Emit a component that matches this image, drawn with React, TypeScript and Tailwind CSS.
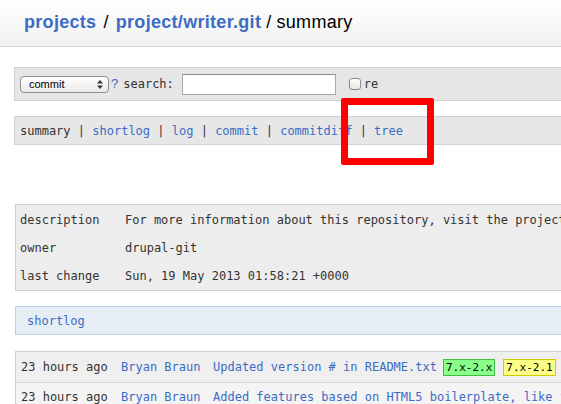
import React from "react";

const mono = "font-['DejaVu_Sans_Mono',monospace]";
const link = "text-[#3c6cc4]";

function SelectBox() {
  return (
    <div className="flex h-[17px] w-[89px] items-center justify-between rounded-[4px] border border-[#8e8e8e] bg-gradient-to-b from-white to-[#e9e9e9] pl-[8px] pr-[5px] font-['Liberation_Sans',sans-serif] text-[11px] text-black">
      <span>commit</span>
      <svg width="6" height="9" viewBox="0 0 6 9">
        <path d="M3 0 L6 3.5 L0 3.5 Z" fill="#333" />
        <path d="M3 9 L6 5.5 L0 5.5 Z" fill="#333" />
      </svg>
    </div>
  );
}

const shortlog = [
  {
    age: "23 hours ago",
    author: "Bryan Braun",
    title: "Updated version # in README.txt",
    tags: true,
  },
  {
    age: "23 hours ago",
    author: "Bryan Braun",
    title: "Added features based on HTML5 boilerplate, like fixing the IE conditional comments",
    tags: false,
  },
];

export default function App() {
  return (
    <div className="relative h-[404px] w-[561px] overflow-hidden bg-white">
      <div className="w-[900px]">
        <div className="flex h-[47px] items-center border-b border-[#d9d9d9] bg-gradient-to-b from-white to-[#f1f1f1] pb-[2px] pl-[24px] font-['Liberation_Sans',sans-serif] text-[18px] tracking-[0.3px] text-black">
          <span className={`font-bold ${link}`}>projects</span>
          <span className="mx-[7px]">/</span>
          <span className={`font-bold ${link}`}>project/writer.git</span>
          <span className="mx-[5px]">/</span>
          <span>summary</span>
        </div>

        <div className={`mx-[14px] ${mono} text-[12px] text-[#333]`}>
          <div className="mt-[20px] flex h-[34px] items-center border border-[#d0d0d0] bg-[#e6e6e6] pl-[5px]">
            <SelectBox />
            <span className={`ml-[2px] font-['Liberation_Sans',sans-serif] text-[13px] ${link}`}>?</span>
            <span className="ml-[5px]">search:</span>
            <div className="ml-[8px] h-[21px] w-[154px] border border-[#a9a9a9] border-t-[#8a8a8a] bg-white" />
            <div className="ml-[13px] h-[12px] w-[12px] rounded-[3px] border border-[#8a8a8a] bg-gradient-to-b from-white to-[#e4e4e4]" />
            <span className="ml-[3px]">re</span>
          </div>

          <div className="mt-[15px] flex h-[29px] items-center whitespace-pre border border-[#d3d3d3] bg-[#e7e7e7] pl-[5px] pt-[1px]">
            <span>summary</span>
            <span> | </span>
            <span className={link}>shortlog</span>
            <span> | </span>
            <span className={link}>log</span>
            <span> | </span>
            <span className={link}>commit</span>
            <span> | </span>
            <span className={link}>commitdiff</span>
            <span> | </span>
            <span className={link}>tree</span>
          </div>

          <div className="mt-[59px] ml-[1px] border border-[#cfcfcf] bg-[#ededed] pt-[1px]">
            {[
              ["description", "For more information about this repository, visit the project page at http://drupal.org/project/writer"],
              ["owner", "drupal-git"],
              ["last change", "Sun, 19 May 2013 01:58:21 +0000"],
            ].map(([k, v]) => (
              <div key={k} className="flex h-[28px] items-center whitespace-pre">
                <span className="w-[109px] pl-[4px]">{k}</span>
                <span>{v}</span>
              </div>
            ))}
          </div>

          <div className="mt-[15px] ml-[1px] flex h-[29px] items-center border border-[#b8d3ec] bg-[#e6edf4] pl-[11px]">
            <span className={link}>shortlog</span>
          </div>

          <div className="mt-[16px] ml-[1px] border border-[#d0d0d0] shadow-[inset_0_2px_3px_rgba(0,0,0,0.08)]">
            {shortlog.map((r, i) => (
              <div
                key={i}
                className={`flex items-center whitespace-pre ${i === 0 ? "h-[30px] bg-[#efefef]" : "h-[28px] border-t border-[#d6d6d6] bg-[#f4f4f4]"}`}
              >
                <span className="w-[105px] pl-[5px]">{r.age}</span>
                <span className={`w-[92px] ${link}`}>{r.author}</span>
                <span className={link}>{r.title}</span>
                {r.tags && (
                  <>
                    <span className="ml-[6px] border border-[#44bb44] bg-[#88ff88] px-[2px] text-[11px] leading-[15px] text-black">
                      7.x-2.x
                    </span>
                    <span className="ml-[8px] border border-[#cccc00] bg-[#ffff88] px-[2px] text-[11px] leading-[15px] text-black">
                      7.x-2.1
                    </span>
                  </>
                )}
              </div>
            ))}
          </div>
        </div>
      </div>

      <div className="absolute left-[341px] top-[98px] h-[67px] w-[93px] rounded-[2px] border-[7px] border-[#ff0000]" />
    </div>
  );
}
